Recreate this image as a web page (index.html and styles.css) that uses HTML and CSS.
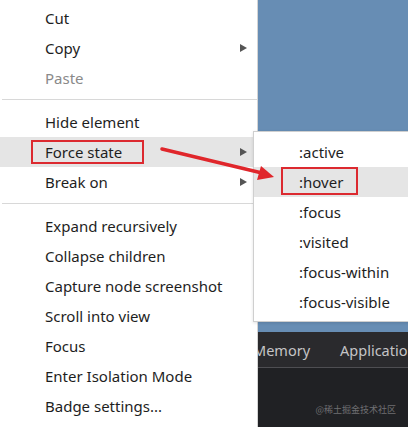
FILE: index.html
```html
<!DOCTYPE html>
<html>
<head>
<meta charset="utf-8">
<link rel="stylesheet" href="styles.css">
</head>
<body>
<div class="screen">
  <div class="menu">
    <div class="item">Cut</div>
    <div class="item sub">Copy<span class="tri"></span></div>
    <div class="item disabled">Paste</div>
    <div class="sep"></div>
    <div class="item">Hide element</div>
    <div class="item sub active">Force state<span class="tri"></span></div>
    <div class="item sub">Break on<span class="tri"></span></div>
    <div class="sep"></div>
    <div class="item">Expand recursively</div>
    <div class="item">Collapse children</div>
    <div class="item">Capture node screenshot</div>
    <div class="item">Scroll into view</div>
    <div class="item">Focus</div>
    <div class="item">Enter Isolation Mode</div>
    <div class="item">Badge settings...</div>
  </div>
  <div class="pane">
    <div class="page"></div>
    <div class="devtools">
      <div class="tabs">
        <span class="tab first">Memory</span>
        <span class="tab">Application</span>
      </div>
      <div class="body">
        <span class="mark">@稀土掘金技术社区</span>
      </div>
    </div>
  </div>

  <div class="submenu">
    <div class="item">:active</div>
    <div class="item active">:hover</div>
    <div class="item">:focus</div>
    <div class="item">:visited</div>
    <div class="item">:focus-within</div>
    <div class="item">:focus-visible</div>
  </div>

  <div class="mark-box box-force"></div>
  <div class="mark-box box-hover"></div>
  <svg class="arrow" width="408" height="427" viewBox="0 0 408 427">
    <line x1="162" y1="149" x2="262" y2="173" stroke="#e0262b" stroke-width="3.5" stroke-linecap="round"/>
    <polygon points="274,177 257,180 261,166" fill="#e0262b"/>
  </svg>
</div>
</body>
</html>
```

FILE: styles.css
```css
html, body {
  margin: 0;
  padding: 0;
}
body {
  width: 408px;
  height: 427px;
  overflow: hidden;
  font-family: "Noto Sans", "Open Sans", sans-serif;
  font-size: 15px;
  color: #1e1e1e;
}
.screen {
  position: relative;
  display: flex;
  width: 408px;
  height: 427px;
  overflow: hidden;
}
.menu {
  flex: none;
  width: 258px;
  background: #fff;
  border-right: 1px solid #d4d4d4;
  padding-top: 3px;
  box-sizing: border-box;
}
.item {
  position: relative;
  height: 30px;
  line-height: 30px;
  padding-left: 45px;
  white-space: nowrap;
}
.item.disabled {
  color: #8a8a8a;
}
.item.active {
  background: #e5e5e5;
}
.tri {
  position: absolute;
  left: 240px;
  top: 11px;
  width: 0;
  height: 0;
  border-left: 7px solid #555;
  border-top: 4.5px solid transparent;
  border-bottom: 4.5px solid transparent;
}
.sep {
  height: 1px;
  margin: 6px 0 7px 2px;
  background: #d8d8d8;
}
.pane {
  flex: 1;
  display: flex;
  flex-direction: column;
  overflow: hidden;
}
.page {
  height: 332px;
  flex: none;
  background: #678db4;
}
.devtools {
  flex: 1;
  display: flex;
  flex-direction: column;
  background: #202124;
}
.tabs {
  height: 35px;
  flex: none;
  display: flex;
  align-items: center;
  background: #2a2a2d;
  border-bottom: 1px solid #4e4e52;
  color: #c4c4c6;
  font-size: 14.5px;
  white-space: nowrap;
  overflow: hidden;
}
.tab.first {
  margin-left: -5px;
  margin-right: 30px;
}
.body {
  flex: 1;
  display: flex;
  align-items: flex-end;
  justify-content: flex-end;
  padding: 0 12px 10px 0;
}
.mark {
  font-family: "Noto Sans CJK SC", sans-serif;
  font-size: 9px;
  line-height: 14px;
  color: #6f6f72;
}
.submenu {
  position: absolute;
  left: 253px;
  top: 131px;
  width: 200px;
  background: #fff;
  border: 1px solid #cfcfcf;
  padding: 5px 0 4px;
  box-shadow: 0 1px 3px rgba(0,0,0,0.12);
}
.mark-box {
  position: absolute;
  border: 2px solid #dc2a30;
  box-sizing: border-box;
}
.box-force {
  left: 31px;
  top: 140px;
  width: 113px;
  height: 24px;
}
.box-hover {
  left: 281px;
  top: 167px;
  width: 77px;
  height: 28px;
}
.arrow {
  position: absolute;
  left: 0;
  top: 0;
}
```
